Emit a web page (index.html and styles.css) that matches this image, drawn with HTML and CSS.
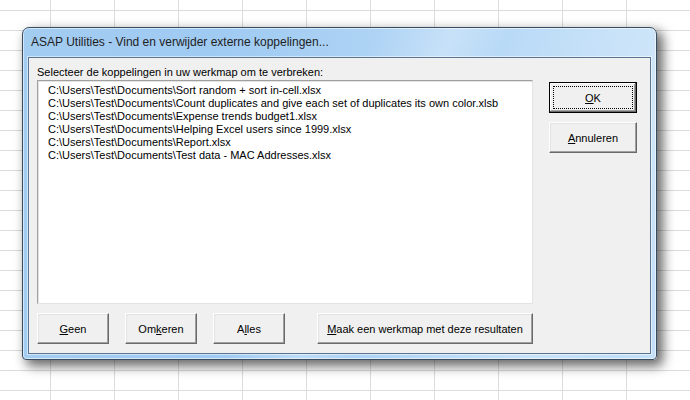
FILE: index.html
```html
<!DOCTYPE html>
<html>
<head>
<meta charset="utf-8">
<link rel="stylesheet" href="styles.css">
</head>
<body>
<div class="window">
  <div class="titlebar">ASAP Utilities - Vind en verwijder externe koppelingen...</div>
  <div class="client">
    <div class="main">
      <div class="label">Selecteer de koppelingen in uw werkmap om te verbreken:</div>
      <div class="listbox">
        <div class="item">C:\Users\Test\Documents\Sort random + sort in-cell.xlsx</div>
        <div class="item">C:\Users\Test\Documents\Count duplicates and give each set of duplicates its own color.xlsb</div>
        <div class="item">C:\Users\Test\Documents\Expense trends budget1.xlsx</div>
        <div class="item">C:\Users\Test\Documents\Helping Excel users since 1999.xlsx</div>
        <div class="item">C:\Users\Test\Documents\Report.xlsx</div>
        <div class="item">C:\Users\Test\Documents\Test data - MAC Addresses.xlsx</div>
      </div>
      <div class="bottom-row">
        <div class="btn btn-small"><u>G</u>een</div>
        <div class="btn btn-small">Om<u>k</u>eren</div>
        <div class="btn btn-small">A<u>l</u>les</div>
        <div class="btn btn-wide"><u>M</u>aak een werkmap met deze resultaten</div>
      </div>
    </div>
    <div class="side">
      <div class="btn btn-side btn-default"><span class="focus"><u>O</u>K</span></div>
      <div class="btn btn-side"><u>A</u>nnuleren</div>
    </div>
  </div>
</div>
</body>
</html>
```

FILE: styles.css
```css
html, body {
  margin: 0;
  padding: 0;
}
body {
  width: 690px;
  height: 400px;
  overflow: hidden;
  background-color: #ffffff;
  background-image:
    linear-gradient(to right, #dadcdd 1px, transparent 1px),
    linear-gradient(to bottom, #dadcdd 1px, transparent 1px);
  background-size: 64px 100%, 100% 20px;
  background-position: 50px 0, 0 10px;
  padding: 27px 0 0 22px;
  box-sizing: border-box;
  font-family: "Liberation Sans", Arial, sans-serif;
}
.window {
  width: 635px;
  height: 333px;
  box-sizing: border-box;
  border: 1px solid #3a4d60;
  border-radius: 7px 7px 4px 4px;
  background:
    linear-gradient(115deg, rgba(255,255,255,0) 0%, rgba(255,255,255,0) 45%, rgba(255,255,255,0.25) 55%, rgba(255,255,255,0) 62%, rgba(255,255,255,0.2) 85%, rgba(255,255,255,0) 95%),
    linear-gradient(to right, #a3ccf1 0%, #9fcaf2 30%, #b6d8f6 70%, #c4e0f8 100%);
  box-shadow: 5px 5px 12px 1px rgba(0,0,0,0.6), inset 0 0 0 1px rgba(255,255,255,0.55);
  padding: 0 5px 5px 5px;
  display: flex;
  flex-direction: column;
}
.titlebar {
  height: 29px;
  flex: none;
  box-sizing: border-box;
  padding: 7px 0 0 3px;
  font-family: "Liberation Sans", Arial, sans-serif;
  font-size: 12px;
  color: #1e1e1e;
  white-space: nowrap;
}
.client {
  flex: 1;
  background: #f0f0f0;
  border: 1px solid #5b7590;
  box-shadow: 0 0 0 1px rgba(255,255,255,0.5);
  display: flex;
  padding: 8px 0 0 8px;
  gap: 16px;
  font-size: 11px;
  color: #000;
}
.main {
  width: 496px;
  display: flex;
  flex-direction: column;
}
.label {
  line-height: 13px;
  height: 13px;
  margin-bottom: 1px;
  white-space: nowrap;
}
.listbox {
  height: 224px;
  box-sizing: border-box;
  background: #ffffff;
  border-top: 1px solid #a0a0a0;
  border-left: 1px solid #a0a0a0;
  border-right: 1px solid #e3e3e3;
  border-bottom: 1px solid #e3e3e3;
  box-shadow: inset 1px 1px 0 #e3e3e3;
  padding: 3px 0 0 10px;
}
.item {
  height: 13px;
  line-height: 13px;
  white-space: nowrap;
}
.bottom-row {
  display: flex;
  margin-top: 9px;
  gap: 0;
}
.btn {
  box-sizing: border-box;
  height: 31px;
  background: #f0f0f0;
  border-top: 1px solid #ffffff;
  border-left: 1px solid #ffffff;
  border-right: 1px solid #696969;
  border-bottom: 1px solid #696969;
  box-shadow: inset -1px -1px 0 #a0a0a0, inset 1px 1px 0 #e3e3e3;
  display: flex;
  align-items: center;
  justify-content: center;
  white-space: nowrap;
  font-size: 11px;
}
.btn u {
  text-decoration-thickness: 1px;
  text-underline-offset: 1px;
}
.btn-small {
  width: 72px;
  margin-right: 16px;
}
.btn-small:nth-child(3) {
  margin-right: 32px;
}
.btn-wide {
  width: 216px;
}
.side {
  display: flex;
  flex-direction: column;
  padding-top: 16px;
  gap: 9px;
}
.btn-side {
  width: 88px;
}
.btn-default {
  border: 1px solid #000000;
  box-shadow: inset -1px -1px 0 #696969, inset 1px 1px 0 #ffffff, inset -2px -2px 0 #a0a0a0;
  position: relative;
}
.focus {
  position: absolute;
  left: 3px;
  top: 3px;
  right: 3px;
  bottom: 3px;
  border: 1px dotted #000;
  display: flex;
  align-items: center;
  justify-content: center;
}
```
